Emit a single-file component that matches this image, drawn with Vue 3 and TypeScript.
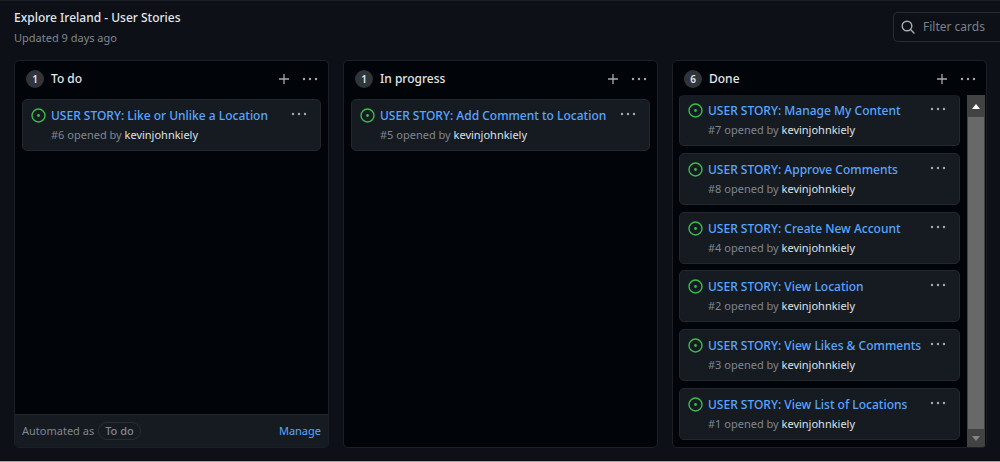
<script setup lang="ts">
import { ref } from 'vue'

interface Card {
  id: number
  title: string
}

interface Column {
  name: string
  cards: Card[]
  automated?: boolean
  scrolls?: boolean
}

const author = 'kevinjohnkiely'
const filter = ref('')

const columns: Column[] = [
  { name: 'To do', automated: true, cards: [{ id: 6, title: 'Like or Unlike a Location' }] },
  { name: 'In progress', cards: [{ id: 5, title: 'Add Comment to Location' }] },
  {
    name: 'Done',
    scrolls: true,
    cards: [
      { id: 7, title: 'Manage My Content' },
      { id: 8, title: 'Approve Comments' },
      { id: 4, title: 'Create New Account' },
      { id: 2, title: 'View Location' },
      { id: 3, title: 'View Likes & Comments' },
      { id: 1, title: 'View List of Locations' },
    ],
  },
]
</script>

<template>
  <div class="page">
    <header class="top">
      <div>
        <h1>Explore Ireland - User Stories</h1>
        <p class="updated">Updated 9 days ago</p>
      </div>
      <label class="filter">
        <svg width="14" height="14" viewBox="0 0 14 14" aria-hidden="true">
          <circle cx="6" cy="6" r="4.8" />
          <path d="M9.5 9.5 13 13" />
        </svg>
        <input v-model="filter" type="text" placeholder="Filter cards" aria-label="Filter cards" />
      </label>
    </header>

    <main class="board">
      <section v-for="column in columns" :key="column.name" class="column">
        <div class="column-head">
          <span class="count">{{ column.cards.length }}</span>
          <h2>{{ column.name }}</h2>
          <button class="icon" type="button" :aria-label="`Add a card to ${column.name}`">
            <svg width="12" height="12" viewBox="0 0 12 12" aria-hidden="true">
              <path class="plus" d="M6 1v10M1 6h10" />
            </svg>
          </button>
          <button class="icon" type="button" :aria-label="`${column.name} menu`">
            <svg width="16" height="4" viewBox="0 0 16 4" aria-hidden="true">
              <circle cx="2" cy="2" r="1.2" /><circle cx="8" cy="2" r="1.2" /><circle cx="14" cy="2" r="1.2" />
            </svg>
          </button>
        </div>

        <div class="column-body">
          <div class="cards" :class="{ full: column.scrolls }">
            <article v-for="card in column.cards" :key="card.id" class="card">
              <svg class="open" width="15" height="15" viewBox="0 0 15 15" aria-hidden="true">
                <circle class="ring" cx="7.5" cy="7.5" r="6.5" />
                <circle class="dot" cx="7.5" cy="7.5" r="1.4" />
              </svg>
              <div class="card-text">
                <a class="title" href="#">USER STORY: {{ card.title }}</a>
                <p class="meta">#{{ card.id }} opened by <a href="#">{{ author }}</a></p>
              </div>
              <button class="icon" type="button" :aria-label="`Menu for card ${card.id}`">
                <svg width="16" height="4" viewBox="0 0 16 4" aria-hidden="true">
                  <circle cx="2" cy="2" r="1.2" /><circle cx="8" cy="2" r="1.2" /><circle cx="14" cy="2" r="1.2" />
                </svg>
              </button>
            </article>
          </div>
          <div v-if="column.scrolls" class="scrollbar">
            <button type="button" class="step up" aria-label="Scroll up">
              <svg width="8" height="5" viewBox="0 0 8 5" aria-hidden="true"><path d="M0 5 4 0l4 5z" /></svg>
            </button>
            <div class="thumb"></div>
            <button type="button" class="step down" aria-label="Scroll down">
              <svg width="8" height="5" viewBox="0 0 8 5" aria-hidden="true"><path d="M0 0l4 5 4-5z" /></svg>
            </button>
          </div>
        </div>

        <footer v-if="column.automated" class="column-foot">
          <span>Automated as</span>
          <span class="pill">{{ column.name }}</span>
          <a href="#">Manage</a>
        </footer>
      </section>
    </main>
  </div>
</template>

<style>
body {
  background: #0d1117;
}
</style>

<style scoped>
.page {
  box-sizing: border-box;
  display: flex;
  flex-direction: column;
  min-height: 100vh;
  border-top: 1px solid #1a1f26;
  border-bottom: 1px solid #a2a4a6;
  background: #0d1117;
  color: #e1e7ed;
  font: 12px/16px "Noto Sans", "Open Sans", sans-serif;
  overflow: hidden;
}
h1, h2, p {
  margin: 0;
}
a {
  text-decoration: none;
}
.top {
  display: flex;
  justify-content: space-between;
  height: 59px;
  padding-left: 14px;
}
h1 {
  padding-top: 8px;
  font-size: 12px;
  font-weight: 500;
  line-height: 18px;
}
.updated {
  padding-top: 3px;
  color: #80868e;
  font-size: 11px;
}
.filter {
  box-sizing: border-box;
  display: flex;
  align-items: center;
  gap: 8px;
  width: 107px;
  height: 30px;
  margin-top: 11px;
  padding-left: 7px;
  border: 1px solid #282d34;
  border-right: 0;
  border-radius: 5px 0 0 5px;
}
.filter svg {
  flex: none;
  fill: none;
  stroke: #a4abb3;
  stroke-width: 1.4;
  stroke-linecap: round;
}
.filter input {
  min-width: 0;
  width: 100%;
  padding: 0;
  border: 0;
  outline: 0;
  background: none;
  color: inherit;
  font: inherit;
}
.filter input::placeholder {
  color: #7a8088;
  opacity: 1;
}
.board {
  display: grid;
  flex: 1;
  grid-template-columns: repeat(3, minmax(0, 1fr));
  gap: 14px;
  padding: 0 13px 13px 14px;
}
.column {
  display: flex;
  flex-direction: column;
  border: 1px solid #1b2027;
  border-radius: 5px;
  background: #010409;
  overflow: hidden;
}
.column-head {
  box-sizing: border-box;
  display: flex;
  align-items: center;
  height: 34px;
  padding: 2px 10px 0 11px;
}
.count {
  width: 18px;
  margin-right: 7px;
  border-radius: 9px;
  background: #30343b;
  font-size: 10px;
  font-weight: 600;
  line-height: 18px;
  text-align: center;
}
h2 {
  flex: 1;
  font-size: 12px;
  font-weight: 500;
}
.icon {
  display: flex;
  padding: 0;
  border: 0;
  background: none;
  fill: #a4abb3;
}
.column-head .icon + .icon {
  margin-left: 12px;
}
.plus {
  stroke: #a4abb3;
  stroke-width: 1.3;
}
.column-body {
  display: flex;
  flex: 1;
  min-height: 0;
}
.cards {
  display: flex;
  flex: 1;
  flex-direction: column;
  min-width: 0;
  padding: 4px 7px 6px;
}
.cards.full {
  justify-content: space-between;
  margin-top: -1px;
  padding: 0 7px 7px 6px;
}
.card {
  box-sizing: border-box;
  display: flex;
  align-items: flex-start;
  height: 52px;
  padding: 7px 13px 0 8px;
  border: 1px solid #23282f;
  border-radius: 5px;
  background: #161b22;
}
.full .card:first-child {
  border-top-color: #010409;
}
.open {
  flex: none;
  margin: 1px 5px 0 0;
}
.ring {
  fill: none;
  stroke: #3fb950;
  stroke-width: 1.4;
}
.dot {
  fill: #3fb950;
}
.card-text {
  flex: 1;
  min-width: 0;
  white-space: nowrap;
}
.title {
  display: block;
  color: #58a6ff;
  font-weight: 500;
  line-height: 18px;
}
.meta {
  padding-top: 2px;
  color: #80868e;
  font-size: 11px;
}
.meta a {
  color: #dce2e8;
}
.card .icon {
  padding-top: 5px;
}
.scrollbar {
  display: flex;
  flex-direction: column;
  width: 18px;
  margin-right: 1px;
  background: #424242;
}
.step {
  display: flex;
  align-items: center;
  justify-content: center;
  height: 18px;
  padding: 0;
  border: 0;
  background: #424242;
}
.up {
  height: 22px;
  fill: #fff;
}
.down {
  fill: #858585;
}
.thumb {
  flex: 1;
  margin: 0 1px;
  background: #686868;
}
.column-foot {
  display: flex;
  align-items: center;
  height: 32px;
  padding: 0 7px;
  border-top: 1px solid #23282f;
  background: #161b22;
  color: #80868e;
  font-size: 11px;
}
.pill {
  margin-left: 4px;
  padding: 0 6px;
  border: 1px solid #282d34;
  border-radius: 9px;
  font-weight: 500;
}
.column-foot a {
  margin-left: auto;
  color: #58a6ff;
}
</style>
